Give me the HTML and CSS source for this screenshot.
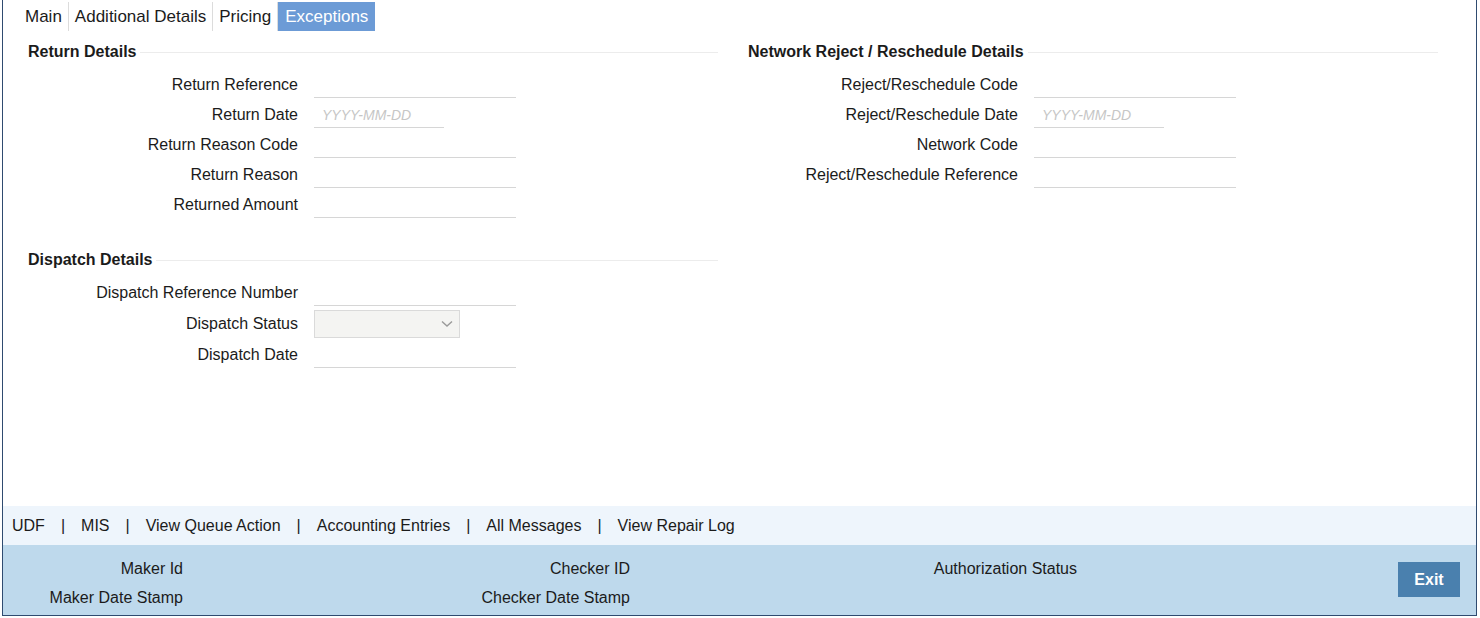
FILE: index.html
```html
<!DOCTYPE html>
<html lang="en">
<head>
    <meta charset="UTF-8">
    <title>Exceptions</title>
    <link rel="stylesheet" href="styles.css">
</head>
<body>
    <div class="frame">
        <div class="tabs">
            <span class="tab">Main</span>
            <span class="tab">Additional Details</span>
            <span class="tab">Pricing</span>
            <span class="tab active">Exceptions</span>
        </div>

        <div class="content">
            <div class="column">
                <div class="section">
                    <div class="section-head">Return Details</div>
                    <div class="rows">
                        <div class="row"><label>Return Reference</label><input type="text" class="field"></div>
                        <div class="row"><label>Return Date</label><input type="text" class="field date" placeholder="YYYY-MM-DD"></div>
                        <div class="row"><label>Return Reason Code</label><input type="text" class="field"></div>
                        <div class="row"><label>Return Reason</label><input type="text" class="field"></div>
                        <div class="row"><label>Returned Amount</label><input type="text" class="field"></div>
                    </div>
                </div>

                <div class="section second">
                    <div class="section-head">Dispatch Details</div>
                    <div class="rows">
                        <div class="row"><label>Dispatch Reference Number</label><input type="text" class="field"></div>
                        <div class="row tall">
                            <label>Dispatch Status</label>
                            <div class="select">
                                <svg width="12" height="8" viewBox="0 0 12 8"><path d="M1 1.5 L6 6 L11 1.5" fill="none" stroke="#9a9a9a" stroke-width="1.4"/></svg>
                            </div>
                        </div>
                        <div class="row"><label>Dispatch Date</label><input type="text" class="field"></div>
                    </div>
                </div>
            </div>

            <div class="column">
                <div class="section">
                    <div class="section-head">Network Reject / Reschedule Details</div>
                    <div class="rows">
                        <div class="row"><label>Reject/Reschedule Code</label><input type="text" class="field"></div>
                        <div class="row"><label>Reject/Reschedule Date</label><input type="text" class="field date" placeholder="YYYY-MM-DD"></div>
                        <div class="row"><label>Network Code</label><input type="text" class="field"></div>
                        <div class="row"><label>Reject/Reschedule Reference</label><input type="text" class="field"></div>
                    </div>
                </div>
            </div>
        </div>

        <div class="links">
            <span>UDF</span><span class="sep">|</span>
            <span>MIS</span><span class="sep">|</span>
            <span>View Queue Action</span><span class="sep">|</span>
            <span>Accounting Entries</span><span class="sep">|</span>
            <span>All Messages</span><span class="sep">|</span>
            <span>View Repair Log</span>
        </div>

        <div class="audit">
            <div class="audit-grid">
                <span class="audit-label">Maker Id</span><span></span>
                <span class="audit-label">Checker ID</span><span></span>
                <span class="audit-label">Authorization Status</span>
                <span class="audit-label">Maker Date Stamp</span><span></span>
                <span class="audit-label">Checker Date Stamp</span><span></span>
                <span></span>
            </div>
            <button class="exit">Exit</button>
        </div>
    </div>
</body>
</html>
```

FILE: styles.css
```css
body {
    margin: 0;
    padding: 0;
    font-family: "Liberation Sans", Arial, sans-serif;
    font-size: 16px;
    color: #1b1b1b;
    background: #fff;
}

.frame {
    margin-left: 2px;
    width: 1475px;
    height: 616px;
    box-sizing: border-box;
    border: 1px solid #2f4b70;
    border-top: none;
    display: flex;
    flex-direction: column;
}

/* tabs */
.tabs {
    display: flex;
    padding: 2px 0 0 16px;
    height: 31px;
    box-sizing: border-box;
}

.tab {
    font-size: 17px;
    padding: 0 6px;
    height: 29px;
    line-height: 29px;
    border-right: 1px solid #dcdcdc;
    white-space: nowrap;
}

.tab.active {
    background-color: #6c9bd6;
    color: #fff;
    border-right: none;
    padding: 0 7px;
}

/* form area */
.content {
    flex: 1;
    display: flex;
    gap: 30px;
    padding-left: 25px;
}

.column {
    width: 690px;
}

.section-head {
    display: flex;
    align-items: center;
    height: 20px;
    margin-top: 11px;
    font-weight: bold;
    white-space: nowrap;
}

.section-head::after {
    content: "";
    flex: 1;
    height: 1px;
    background-color: #ececec;
    margin-left: 4px;
}

.section.second {
    margin-top: 30px;
}

.rows {
    margin-top: 8px;
}

.row {
    display: flex;
    align-items: center;
    height: 30px;
}

.row.tall {
    height: 32px;
}

.row label {
    width: 270px;
    text-align: right;
    margin-right: 16px;
    white-space: nowrap;
}

.field {
    width: 202px;
    height: 25px;
    box-sizing: border-box;
    border: none;
    border-bottom: 1px solid #d6d6d6;
    padding: 0 8px;
    font-family: "Liberation Sans", Arial, sans-serif;
    font-size: 14px;
    outline: none;
}

.field.date {
    width: 130px;
}

.field::placeholder {
    color: #c6c6c6;
    font-style: italic;
}

.select {
    width: 146px;
    height: 28px;
    box-sizing: border-box;
    border: 1px solid #dadada;
    background-color: #f4f4f2;
    display: flex;
    align-items: center;
    justify-content: flex-end;
    padding-right: 6px;
}

/* bottom link bar */
.links {
    height: 39px;
    display: flex;
    align-items: center;
    padding-left: 9px;
    background-color: #eef5fc;
    white-space: nowrap;
}

.links .sep {
    margin: 0 16px;
}

/* audit strip */
.audit {
    height: 70px;
    background-color: #bed9ec;
    display: flex;
    justify-content: space-between;
    align-items: flex-start;
    padding-right: 16px;
}

.audit-grid {
    display: grid;
    grid-template-columns: 180px 267px 180px 267px 180px;
    grid-auto-rows: 29px;
    padding-top: 9px;
}

.audit-label {
    text-align: right;
    line-height: 29px;
    white-space: nowrap;
}

.exit {
    margin-top: 17px;
    width: 62px;
    height: 35px;
    border: none;
    background-color: #4a80ae;
    color: #fff;
    font-family: "Liberation Sans", Arial, sans-serif;
    font-size: 16px;
    font-weight: bold;
    cursor: pointer;
}
```
